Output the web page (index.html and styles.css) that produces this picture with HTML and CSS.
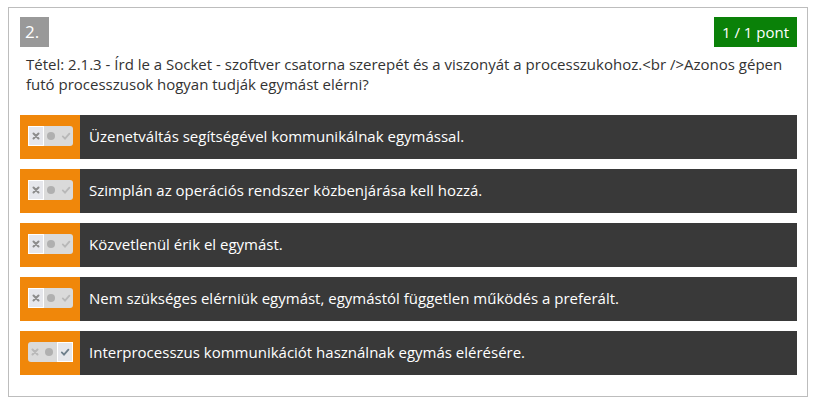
FILE: index.html
```html
<!DOCTYPE html>
<html lang="hu">
<head>
<meta charset="utf-8">
<link rel="stylesheet" href="styles.css">
</head>
<body>
<div class="card">
  <div class="head">
    <span class="num">2.</span>
    <span class="score">1 / 1 pont</span>
  </div>
  <p class="question">Tétel: 2.1.3 - Írd le a Socket - szoftver csatorna szerepét és a viszonyát a processzukohoz.&lt;br /&gt;Azonos gépen futó processzusok hogyan tudják egymást elérni?</p>
  <div class="answers">
    <div class="answer">
      <div class="side"><div class="toggle"><span class="seg sel"><svg viewBox="0 0 10 10"><path d="M2.5 2.5l5 5M7.5 2.5l-5 5" stroke="#8c8c8c" stroke-width="2" stroke-linecap="round"/></svg></span><span class="seg"><i class="dot"></i></span><span class="seg"><svg viewBox="0 0 10 10"><path d="M1.8 5.4l2.2 2.2 4.4-5" fill="none" stroke="#b8b8b8" stroke-width="1.8" stroke-linecap="round"/></svg></span></div></div>
      <div class="text">Üzenetváltás segítségével kommunikálnak egymással.</div>
    </div>
    <div class="answer">
      <div class="side"><div class="toggle"><span class="seg sel"><svg viewBox="0 0 10 10"><path d="M2.5 2.5l5 5M7.5 2.5l-5 5" stroke="#8c8c8c" stroke-width="2" stroke-linecap="round"/></svg></span><span class="seg"><i class="dot"></i></span><span class="seg"><svg viewBox="0 0 10 10"><path d="M1.8 5.4l2.2 2.2 4.4-5" fill="none" stroke="#b8b8b8" stroke-width="1.8" stroke-linecap="round"/></svg></span></div></div>
      <div class="text">Szimplán az operációs rendszer közbenjárása kell hozzá.</div>
    </div>
    <div class="answer">
      <div class="side"><div class="toggle"><span class="seg sel"><svg viewBox="0 0 10 10"><path d="M2.5 2.5l5 5M7.5 2.5l-5 5" stroke="#8c8c8c" stroke-width="2" stroke-linecap="round"/></svg></span><span class="seg"><i class="dot"></i></span><span class="seg"><svg viewBox="0 0 10 10"><path d="M1.8 5.4l2.2 2.2 4.4-5" fill="none" stroke="#b8b8b8" stroke-width="1.8" stroke-linecap="round"/></svg></span></div></div>
      <div class="text">Közvetlenül érik el egymást.</div>
    </div>
    <div class="answer">
      <div class="side"><div class="toggle"><span class="seg sel"><svg viewBox="0 0 10 10"><path d="M2.5 2.5l5 5M7.5 2.5l-5 5" stroke="#8c8c8c" stroke-width="2" stroke-linecap="round"/></svg></span><span class="seg"><i class="dot"></i></span><span class="seg"><svg viewBox="0 0 10 10"><path d="M1.8 5.4l2.2 2.2 4.4-5" fill="none" stroke="#b8b8b8" stroke-width="1.8" stroke-linecap="round"/></svg></span></div></div>
      <div class="text">Nem szükséges elérniük egymást, egymástól független működés a preferált.</div>
    </div>
    <div class="answer">
      <div class="side"><div class="toggle"><span class="seg"><svg viewBox="0 0 10 10"><path d="M2.5 2.5l5 5M7.5 2.5l-5 5" stroke="#b8b8b8" stroke-width="2" stroke-linecap="round"/></svg></span><span class="seg"><i class="dot"></i></span><span class="seg sel"><svg viewBox="0 0 10 10"><path d="M1.8 5.4l2.2 2.2 4.4-5" fill="none" stroke="#6f7f8c" stroke-width="1.8" stroke-linecap="round"/></svg></span></div></div>
      <div class="text">Interprocesszus kommunikációt használnak egymás elérésére.</div>
    </div>
  </div>
</div>
</body>
</html>
```
FILE: styles.css
```css
html, body {
  margin: 0;
  padding: 0;
  background: #fff;
}
body {
  padding: 7px 0 0 8px;
  font-family: "Open Sans", "Liberation Sans", sans-serif;
  color: #333;
}
.card {
  width: 798px;
  height: 388px;
  border: 1px solid #bdbdbd;
}
.head {
  display: flex;
  justify-content: space-between;
  align-items: flex-start;
  padding: 9px 10px 0 11px;
}
.num {
  background: #999;
  color: #fff;
  width: 29px;
  height: 30px;
  box-sizing: border-box;
  padding-left: 5px;
  font-size: 17px;
  line-height: 30px;
}
.score {
  background: #0a8108;
  color: #fff;
  height: 30px;
  width: 83px;
  text-align: center;
  font-size: 15px;
  line-height: 30px;
}
.question {
  margin: 7px 18px 0 17px;
  font-size: 15px;
  line-height: 20px;
  color: #333;
}
.answers {
  display: flex;
  flex-direction: column;
  gap: 10px;
  margin: 21px 10px 0 11px;
}
.answer {
  display: flex;
  height: 44px;
  background: #393939;
}
.side {
  width: 60px;
  flex: none;
  background: #f0870a;
  display: flex;
  align-items: center;
  padding-left: 8px;
  box-sizing: border-box;
}
.toggle {
  display: flex;
  width: 45px;
  height: 20px;
  background: #dadada;
  border-radius: 3px;
  margin-top: -2px;
}
.seg {
  flex: 1;
  display: flex;
  align-items: center;
  justify-content: center;
  box-sizing: border-box;
}
.seg svg {
  width: 10px;
  height: 10px;
}
.seg.sel {
  border: 1px solid #fff;
  background: #e6e7ec;
}
.dot {
  width: 8px;
  height: 8px;
  border-radius: 50%;
  background: #b0b0b0;
}
.text {
  color: #fff;
  font-size: 15px;
  padding-left: 9px;
  display: flex;
  align-items: center;
  margin-top: -2px;
}
```
